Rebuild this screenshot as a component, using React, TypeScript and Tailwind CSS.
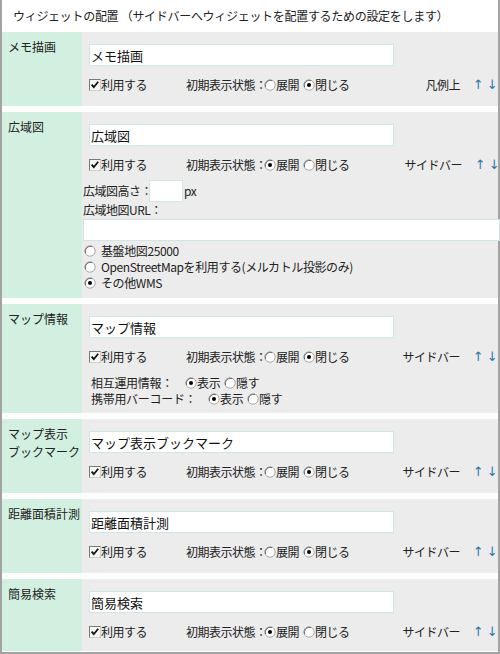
import React from "react";

const FONT = "font-['Noto_Sans_CJK_JP','Noto_Sans',sans-serif]";

function Check() {
  return (
    <svg width="12" height="12" viewBox="0 0 12 12" className="shrink-0">
      <rect x="0.5" y="0.5" width="11" height="11" fill="#f6f6f2" stroke="#7a7a7a" />
      <path d="M11.5 0.5 V11.5 H0.5" fill="none" stroke="#cfcfcf" />
      <path d="M2.6 5.6 L4.8 8.2 L9.2 2.8" fill="none" stroke="#111" strokeWidth="1.8" />
    </svg>
  );
}

function Radio({ on }: { on?: boolean }) {
  return (
    <svg width="12" height="12" viewBox="0 0 12 12" className="shrink-0">
      <circle cx="6" cy="6" r="5.2" fill="#fff" stroke="#a8a8a8" strokeWidth="1" />
      <path d="M1.6 8 A5 5 0 0 1 8 1.6" fill="none" stroke="#6e6e6e" strokeWidth="1" />
      {on && <circle cx="6" cy="6" r="2" fill="#000" />}
    </svg>
  );
}

function StateRow({ open, place }: { open: boolean; place: string }) {
  return (
    <div className="ml-[7px] mt-[11px] h-[16px] flex items-center text-[12px] tracking-[-0.5px]">
      <span className="w-[97px] flex items-center">
        <Check />
        <span className="ml-[0px]">利用する</span>
      </span>
      <span className="w-[78px] whitespace-nowrap">初期表示状態：</span>
      <span className="w-[39px] flex items-center">
        <Radio on={open} />
        <span>展開</span>
      </span>
      <span className="flex items-center">
        <Radio on={!open} />
        <span>閉じる</span>
      </span>
      <span className="flex-1" />
      <span className="whitespace-nowrap">{place}</span>
      <span className="ml-[12px] w-[12px] text-center text-[13px] text-[#2878b0] font-['DejaVu_Sans',sans-serif]">↑</span>
      <span className="ml-[2px] w-[12px] text-center text-[13px] text-[#2878b0] font-['DejaVu_Sans',sans-serif]">↓</span>
    </div>
  );
}

function Section({ label, value, open, place, children, last }: { label: React.ReactNode; value: string; open: boolean; place: string; children?: React.ReactNode; last?: boolean }) {
  return (
    <div className={`flex bg-[#ececec] ${last ? "" : "mb-[6px]"}`}>
      <div className="w-[80px] shrink-0 bg-[#d2f0e0] pl-[6px] pt-[6px] text-[12px] leading-[18px] text-[#222]">{label}</div>
      <div className={`flex-1 pt-[12px] ${children ? "" : last ? "pb-[11px]" : "pb-[13px]"}`}>
        <input readOnly value={value} className="ml-[7px] block w-[305px] h-[22px] border border-[#cde6e8] bg-white px-[1px] text-[13px] text-[#111] outline-none" />
        <StateRow open={open} place={place} />
        {children}
      </div>
    </div>
  );
}

export default function App() {
  return (
    <div className={`w-[500px] h-[654px] bg-white border-x-2 border-b-2 border-[#a3a3a3] text-[#222] ${FONT}`}>
      <div className="h-[32px] pl-[11px] flex items-center text-[12px] tracking-[-0.3px]">ウィジェットの配置 （サイドバーへウィジェットを配置するための設定をします）</div>

      <Section label="メモ描画" value="メモ描画" open={false} place="凡例上" />

      <Section label="広域図" value="広域図" open={true} place="サイドバー">
        <div className="mt-[7px] ml-[1px] flex items-center h-[22px] text-[12px] tracking-[-0.5px]">
          <span className="w-[66px] whitespace-nowrap">広域図高さ：</span>
          <input readOnly value="" className="w-[34px] h-[22px] border border-[#cde6e8] bg-white outline-none" />
          <span className="ml-[1px]">px</span>
        </div>
        <div className="ml-[1px] h-[16px] leading-[16px] text-[12px] tracking-[-0.5px]">広域地図URL：</div>
        <input readOnly value="" className="mt-[1px] ml-[1px] block w-[417px] h-[22px] border border-[#cde6e8] bg-white outline-none" />
        <div className="mt-[2px] ml-[2px] pb-[7px] text-[12px] tracking-[-0.4px]">
          <div className="h-[16px] flex items-center gap-[5px]"><Radio /><span>基盤地図25000</span></div>
          <div className="h-[16px] flex items-center gap-[5px]"><Radio /><span>OpenStreetMapを利用する(メルカトル投影のみ)</span></div>
          <div className="h-[16px] flex items-center gap-[5px]"><Radio on /><span>その他WMS</span></div>
        </div>
      </Section>

      <Section label="マップ情報" value="マップ情報" open={false} place="サイドバー">
        <div className="mt-[10px] ml-[9px] pb-[6px] text-[12px] tracking-[-0.3px]">
          <div className="h-[16px] flex items-center">
            <span className="w-[94px] whitespace-nowrap">相互運用情報：</span>
            <span className="w-[39px] flex items-center"><Radio on /><span>表示</span></span>
            <span className="flex items-center"><Radio /><span>隠す</span></span>
          </div>
          <div className="h-[16px] flex items-center">
            <span className="w-[117px] whitespace-nowrap">携帯用バーコード：</span>
            <span className="w-[39px] flex items-center"><Radio on /><span>表示</span></span>
            <span className="flex items-center"><Radio /><span>隠す</span></span>
          </div>
        </div>
      </Section>

      <Section label={<>マップ表示<br />ブックマーク</>} value="マップ表示ブックマーク" open={false} place="サイドバー" />
      <Section label="距離面積計測" value="距離面積計測" open={false} place="サイドバー" />
      <Section label="簡易検索" value="簡易検索" open={true} place="サイドバー" last />
    </div>
  );
}
